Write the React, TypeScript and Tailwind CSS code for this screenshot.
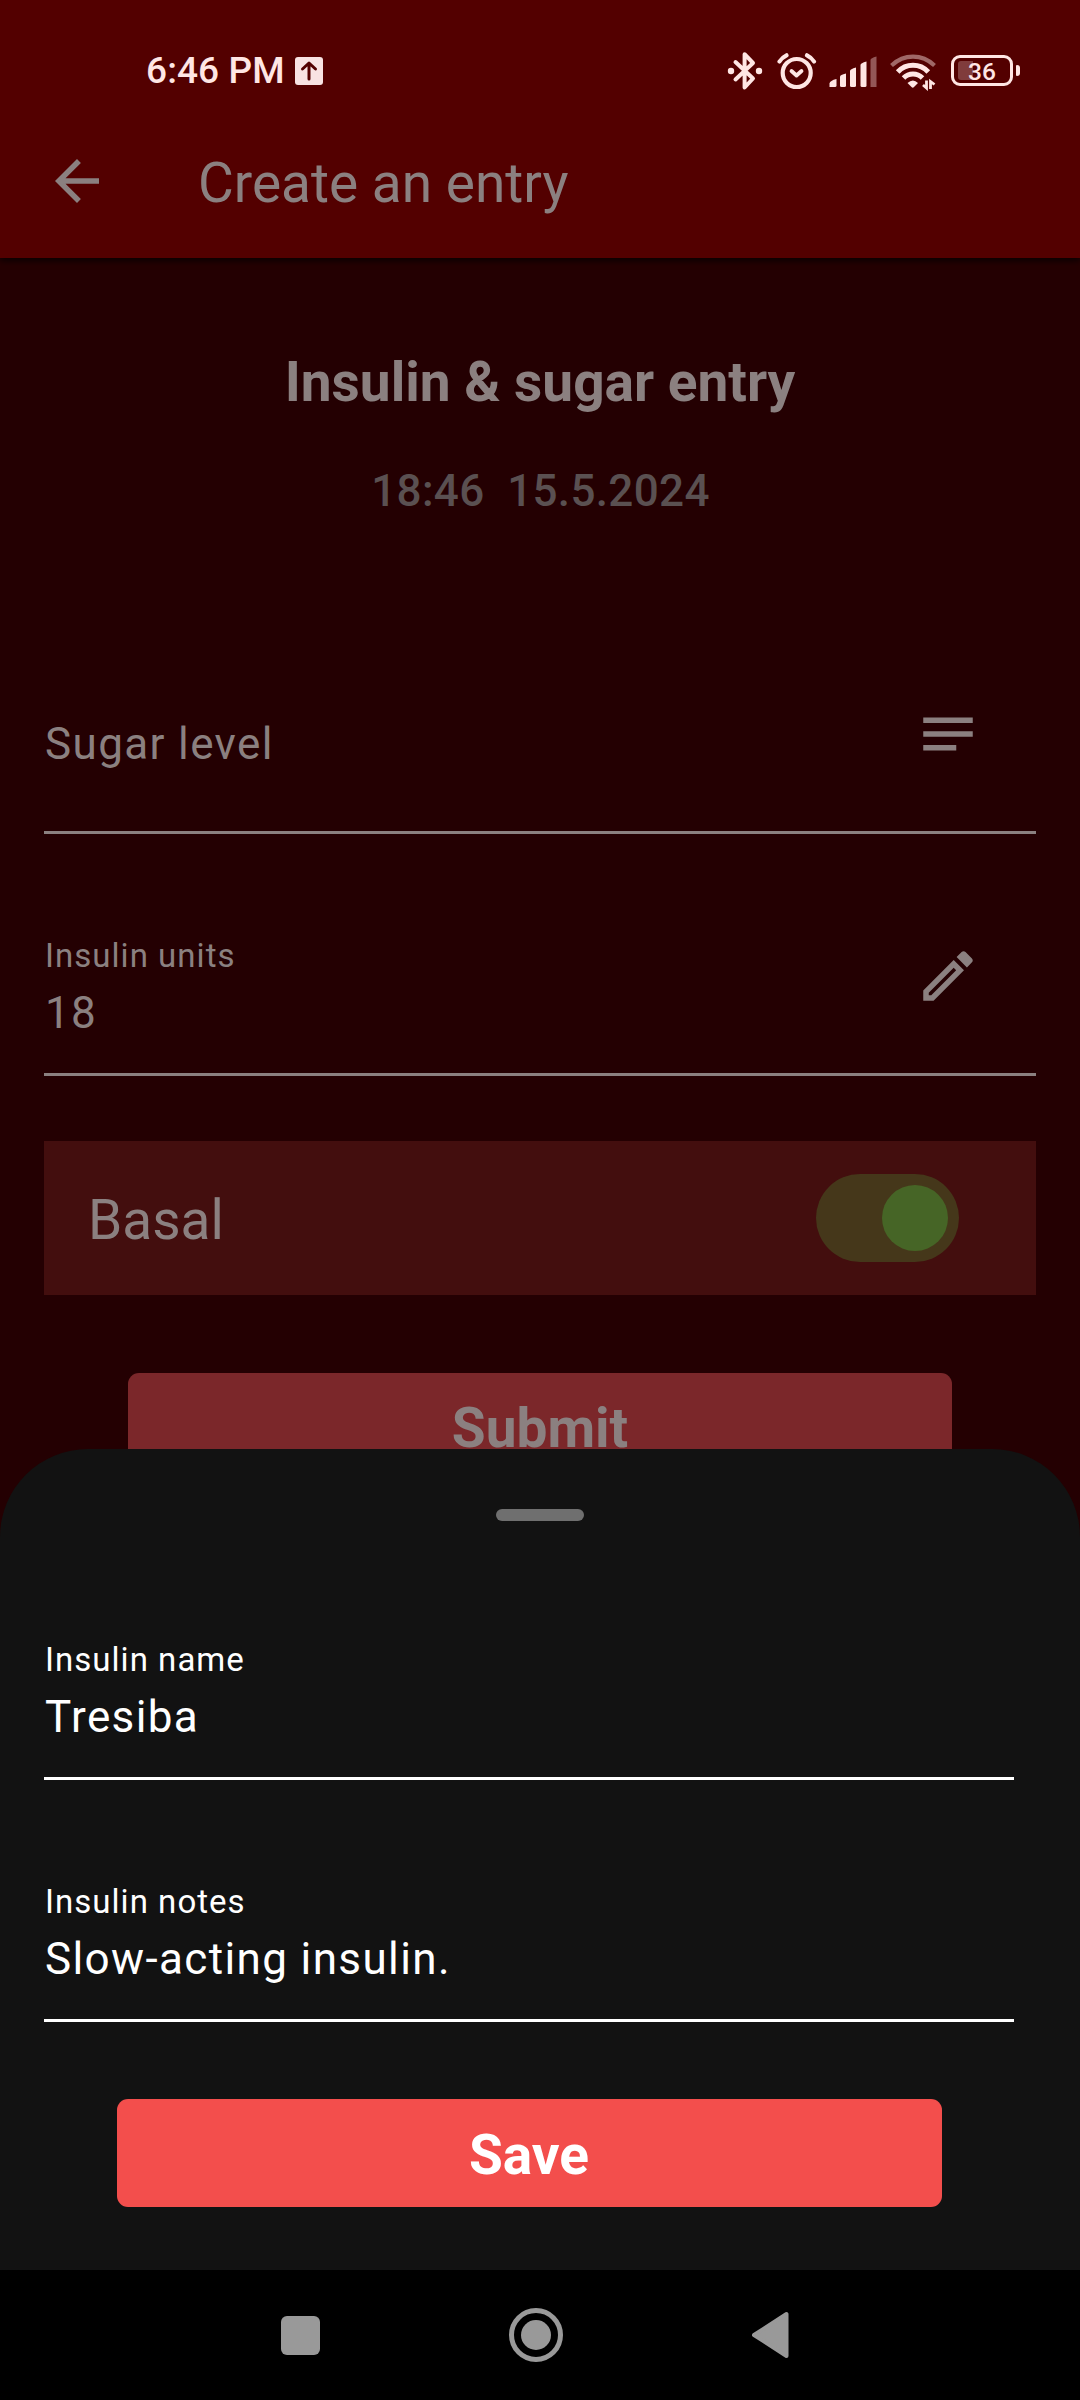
import type { ReactNode } from "react";

function StatusIcons() {
  return (
    <div className="flex items-center text-[#ffe6e4]">
      <svg width="36" height="40" viewBox="0 0 36 40" fill="none" stroke="currentColor" strokeWidth="4" strokeLinejoin="round" strokeLinecap="round">
        <path d="M8.5 11 26 27.5 17.600 36.500V3.200L26 12 8.500 28.500" />
        <circle cx="4" cy="20" r="3.2" fill="currentColor" stroke="none" />
        <circle cx="32" cy="20" r="3.2" fill="currentColor" stroke="none" />
      </svg>
      <svg className="ml-[14px]" width="40" height="40" viewBox="0 0 40 40" fill="none" stroke="currentColor" strokeLinecap="round" strokeLinejoin="round">
        <circle cx="19.7" cy="22" r="14" strokeWidth="4.200" />
        <path d="M14.500 20 19.500 24.500 24.500 20" strokeWidth="3.800" />
        <path d="M2.500 10.500Q5 6.500 9.500 4.300M37 10.500Q34.500 6.500 30 4.300" strokeWidth="4.200" />
      </svg>
      <svg className="ml-[12px]" width="48" height="40" viewBox="0 0 48 40" fill="currentColor">
        <path d="M0.500 36V32.500Q1 29.500 7.500 28V34.500Q7.500 36 6 36Z" />
        <path d="M11 25.500Q11 24 17 22.500V34.500Q17 36 15.500 36H12.500Q11 36 11 34.500Z" />
        <path d="M21 20Q21 18 27 16.500V34.500Q27 36 25.500 36H22.500Q21 36 21 34.500Z" />
        <path d="M31.500 14Q31.500 12 37.500 10.500V34.500Q37.500 36 36 36H33Q31.500 36 31.500 34.500Z" />
        <path opacity=".38" d="M41.500 9Q41.500 7 47.500 5.500V36H41.500Z" />
      </svg>
      <svg className="ml-[13px]" width="46" height="40" viewBox="0 0 46 40" fill="none" stroke="currentColor">
        <path opacity=".45" d="M1.500 14.500Q11 5.700 23 5.700T44.500 14.500" strokeWidth="4.200" />
        <path d="M7.700 21Q14 14.300 23 14.300T38.300 21" strokeWidth="5" />
        <path d="M13.500 27Q17.500 23 23 23T32.500 27" strokeWidth="5" />
        <path d="M17.500 32Q23 27 28 32L24 36Q22.800 37.300 21.500 36Z" fill="currentColor" stroke="none" />
        <path d="M36.500 29.500V37L33 34M40.500 38V30.500L44.500 33.500" strokeWidth="2.800" />
      </svg>
      <div className="ml-[15px] flex items-center">
        <div className="relative flex h-[31px] w-[62px] items-center justify-center rounded-[9px] border-[3px] border-current">
          <div className="absolute left-[4px] top-[3px] h-[19px] w-[15px] rounded-l-[3px] bg-[#803c3c]" />
          <span className="relative pt-px text-[24.500px] font-medium leading-[25px]">36</span>
        </div>
        <div className="ml-[3px] h-[11px] w-[4px] rounded-l-[1px] rounded-r-[3px] bg-current" />
      </div>
    </div>
  );
}

function Header() {
  return (
    <header className="relative h-[258px] bg-[#530000] shadow-[0_3px_6px_rgba(0,0,0,0.7)]">
      <div className="flex h-[103px] items-center justify-between pl-[146px] pr-[60px] pt-[38px]">
        <div className="flex items-center pt-px text-[#ffe6e4]">
          <span className="text-[37px] font-medium leading-[44px] tracking-[0.1px]">6:46 PM</span>
          <svg className="ml-[10px]" width="28" height="28" viewBox="0 0 28 28">
            <rect width="28" height="28" rx="3" fill="#f8e2e2" />
            <path d="M14 22V6.500M7.500 12 14 6 20.500 12" fill="none" stroke="#530000" strokeWidth="3" strokeLinecap="round" strokeLinejoin="round" />
          </svg>
        </div>
        <StatusIcons />
      </div>
      <div className="flex h-[155px] items-center pl-[44px] text-[#8b8080]">
        <svg width="66" height="66" viewBox="0 0 24 24" fill="currentColor">
          <path d="M20 11H7.830l5.590-5.590L12 4l-8 8 8 8 1.410-1.410L7.830 13H20v-2z" />
        </svg>
        <h1 className="ml-[88px] pt-[5px] text-[55px] leading-[64px]">Create an entry</h1>
      </div>
    </header>
  );
}

function Field({ label, value, icon }: { label: string; value?: string; icon?: ReactNode }) {
  return (
    <div className="flex h-[174px] justify-between border-b-[3px] border-current pl-px">
      {value ? (
        <div className="pt-[34px]">
          <div className="text-[33px] leading-[40px] tracking-[1.03px]">{label}</div>
          <div className="mt-[11px] text-[44px] leading-[52px] tracking-[1.375px]">{value}</div>
        </div>
      ) : (
        <div className="pt-[58px] text-[44px] leading-[52px] tracking-[1.375px]">{label}</div>
      )}
      {icon && <div className="mr-[55px] mt-[41px]">{icon}</div>}
    </div>
  );
}

const notesIcon = (
  <svg width="66" height="66" viewBox="0 0 24 24" fill="currentColor">
    <path d="M3 6h18v2H3zM3 11h18v2H3zM3 16h12v2H3z" />
  </svg>
);

const editIcon = (
  <svg width="66" height="66" viewBox="0 0 24 24" fill="currentColor">
    <path d="M14.060 9.020l.92.92L5.920 19H5v-.92l9.060-9.060M17.660 3c-.25 0-.51.1-.7.29l-1.830 1.830 3.750 3.750 1.830-1.830c.39-.39.39-1.020 0-1.410l-2.340-2.340c-.2-.2-.45-.29-.71-.29zm-3.600 3.190L3 17.250V21h3.750L17.810 9.940l-3.750-3.750z" />
  </svg>
);

function EntryForm() {
  return (
    <main className="flex flex-col px-[44px] text-[#8b8080]">
      <h2 className="mt-[92px] text-center text-[55px] font-bold leading-[64px]">Insulin &amp; sugar entry</h2>
      <p className="mt-[51px] whitespace-pre pl-px text-center text-[44px] font-medium leading-[52px] tracking-[0.35px] text-[#5a5051]">
        {"18:46  15.5.2024"}
      </p>
      <div className="mt-[143px] flex flex-col gap-[68px]">
        <Field label="Sugar level" icon={notesIcon} />
        <Field label="Insulin units" value="18" icon={editIcon} />
      </div>
      <div className="mt-[65px] flex h-[154px] items-center justify-between bg-[#430e0e] pl-[44px] pr-[77px]">
        <span className="pt-[3px] text-[55px] leading-[64px]">Basal</span>
        <div className="flex h-[88px] w-[143px] items-center justify-end rounded-full bg-[#45371a] pr-[11px]">
          <div className="size-[66px] rounded-full bg-[#466526]" />
        </div>
      </div>
      <button className="mx-[84px] mt-[78px] h-[108px] rounded-[11px] bg-[#7b272a] pt-[2px] text-[55px] font-bold leading-[64px]">
        Submit
      </button>
    </main>
  );
}

function BottomSheet() {
  return (
    <section className="absolute inset-x-0 bottom-[130px] flex h-[821px] flex-col rounded-t-[88px] bg-[#121212] pl-[44px] pr-[66px] pt-[60px] text-white">
      <div className="ml-[452px] h-[12px] w-[88px] rounded-full bg-[#6f6f6f]" />
      <div className="mt-[85px] flex flex-col gap-[68px]">
        <Field label="Insulin name" value="Tresiba" />
        <Field label="Insulin notes" value="Slow-acting insulin." />
      </div>
      <button className="ml-[72.500px] mr-[72.500px] mt-[77px] h-[108px] rounded-[11px] bg-[#f34e4c] pt-[3px] text-[55px] font-bold leading-[64px]">
        Save
      </button>
    </section>
  );
}

function NavigationBar() {
  return (
    <nav className="absolute inset-x-0 bottom-0 flex h-[130px] items-center bg-black pl-[281px] text-[#999999]">
      <div className="size-[39px] rounded-[6px] bg-current" />
      <div className="ml-[189px] flex size-[54px] items-center justify-center rounded-full border-[5px] border-current">
        <div className="size-[30px] rounded-full bg-current" />
      </div>
      <svg className="ml-[189px]" width="37" height="48" viewBox="0 0 37 48" fill="currentColor" stroke="currentColor" strokeWidth="4" strokeLinejoin="round">
        <path d="M2 24 34.500 3V45Z" />
      </svg>
    </nav>
  );
}

export default function App() {
  return (
    <div className="relative h-[2400px] w-[1080px] overflow-hidden bg-[#240002] font-['Roboto',sans-serif]">
      <Header />
      <EntryForm />
      <BottomSheet />
      <NavigationBar />
    </div>
  );
}
